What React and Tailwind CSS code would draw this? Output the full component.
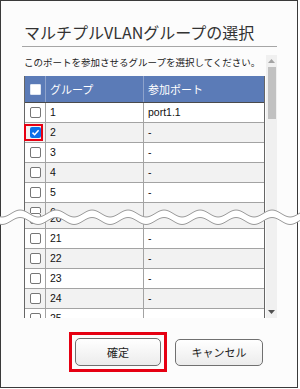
import React from 'react';

function wavePath(offset) {
  let d = '';
  for (let x = 0; x <= 300; x += 2) {
    const y = offset + 3.5 * Math.sin((2 * Math.PI * x) / 36 + 1.2);
    d += (x === 0 ? 'M' : 'L') + x + ',' + y.toFixed(2) + ' ';
  }
  return d;
}

function Wave() {
  const top = wavePath(10.5);
  const bottom = wavePath(18);
  let fill = top;
  for (let x = 300; x >= 0; x -= 2) {
    const y = 18 + 3.5 * Math.sin((2 * Math.PI * x) / 36 + 1.2);
    fill += 'L' + x + ',' + y.toFixed(2) + ' ';
  }
  fill += 'Z';
  return (
    <svg className="absolute left-0 top-[203px]" width="300" height="26" viewBox="0 0 300 26">
      <path d={fill} fill="#ffffff" />
      <path d={top} fill="none" stroke="#9a9a9a" strokeWidth="1" />
      <path d={bottom} fill="none" stroke="#9a9a9a" strokeWidth="1" />
    </svg>
  );
}

function Checkbox({ checked }) {
  if (checked) {
    return (
      <div className="w-[11px] h-[11px] rounded-[2px] bg-[#0a6fe8] flex items-center justify-center">
        <svg width="9" height="9" viewBox="0 0 9 9">
          <path d="M1.5 4.6 L3.6 6.7 L7.6 2.2" fill="none" stroke="#fff" strokeWidth="1.5" />
        </svg>
      </div>
    );
  }
  return <div className="w-[11px] h-[11px] rounded-[2px] border border-[#767676] bg-white" />;
}

function Row({ n, port, shade, checked }) {
  return (
    <div className={`flex h-[20px] border-b border-[#a3a3a3] ${shade ? 'bg-[#f2f2f2]' : 'bg-white'}`}>
      <div className="relative w-[21px] shrink-0 border-r border-[#a3a3a3] flex items-center justify-center">
        <Checkbox checked={checked} />
        {checked && (
          <div className="absolute left-[-1px] top-[1px] w-[19px] h-[17px] border-2 border-[#e60012]" />
        )}
      </div>
      <div className="w-[98px] shrink-0 border-r border-[#a3a3a3] pl-[4px] flex items-center">{n}</div>
      <div className="flex-1 pl-[4px] flex items-center">{port}</div>
    </div>
  );
}

export default function App() {
  return (
    <div className="relative w-[300px] h-[389px] bg-white overflow-hidden font-['Noto_Sans_CJK_JP',sans-serif]">
      <div className="w-[298px] h-[388px] border border-[#3a3a3a] bg-[#fcfcfc] flex flex-col">
        <div className="h-[45px] pl-[23px] pt-[21px] text-[16px] leading-[20px] text-[#333]">
          マルチプルVLANグループの選択
        </div>
        <div className="ml-[21px] w-[255px] h-px bg-[#a6a6a6]" />
        <div className="mt-[8px] ml-[21px] w-[255px] h-[263px] flex">
          <div className="w-[243px] h-full overflow-hidden">
            <div className="h-[21px] pl-[2px] pt-[1px] text-[9.5px] leading-[12px] text-[#222]">
              このポートを参加させるグループを選択してください。
            </div>
            <div className="ml-[2px] w-[241px] border-l border-r border-[#666] text-[10.5px] text-[#111] font-['Liberation_Sans',sans-serif]">
              <div className="flex h-[27px] bg-[#5b7bb7] border-b border-[#4a4a4a] text-white text-[11px] font-['Noto_Sans_CJK_JP',sans-serif]">
                <div className="w-[21px] shrink-0 border-r border-[#8ea3cc] flex items-center justify-center">
                  <div className="w-[11px] h-[11px] rounded-[1px] bg-white border border-[#dfe6f2]" />
                </div>
                <div className="w-[98px] shrink-0 border-r border-[#8ea3cc] pl-[4px] flex items-center">グループ</div>
                <div className="flex-1 pl-[4px] flex items-center">参加ポート</div>
              </div>
              <Row n="1" port="port1.1" />
              <Row n="2" port="-" shade checked />
              <Row n="3" port="-" />
              <Row n="4" port="-" shade />
              <Row n="5" port="-" />
              <div className="h-[10px] overflow-hidden">
                <Row n="6" port="-" shade />
              </div>
              <div className="h-[16px] overflow-hidden">
                <div className="-mt-[4px]">
                  <Row n="20" port="-" shade />
                </div>
              </div>
              <Row n="21" port="-" />
              <Row n="22" port="-" shade />
              <Row n="23" port="-" />
              <Row n="24" port="-" shade />
              <Row n="25" port="-" />
              <Row n="26" port="-" shade />
            </div>
          </div>
          <div className="ml-[1px] w-[11px] h-full bg-[#f0f0f0] flex flex-col items-center">
            <div className="h-[12px] flex items-center justify-center">
              <svg width="7" height="4" viewBox="0 0 7 4">
                <path d="M0 4 L3.5 0 L7 4 Z" fill="#a3a3a3" />
              </svg>
            </div>
            <div className="w-[8px] h-[52px] bg-[#c1c1c1]" />
            <div className="flex-1" />
            <div className="h-[12px] flex items-center justify-center">
              <svg width="7" height="4" viewBox="0 0 7 4">
                <path d="M0 0 L7 0 L3.5 4 Z" fill="#505050" />
              </svg>
            </div>
          </div>
        </div>
        <div className="mt-[14px] pl-[68px] flex items-start text-[11px] text-[#222]">
          <div className="border-[3px] border-[#e60012] p-[3px]">
            <button className="w-[86px] h-[28px] rounded-[5px] border border-[#707070] bg-gradient-to-b from-white to-[#ececec]">
              確定
            </button>
          </div>
          <button className="ml-[8px] mt-[7px] w-[88px] h-[27px] rounded-[5px] border border-[#707070] bg-gradient-to-b from-white to-[#ececec]">
            キャンセル
          </button>
        </div>
      </div>
      <Wave />
    </div>
  );
}
